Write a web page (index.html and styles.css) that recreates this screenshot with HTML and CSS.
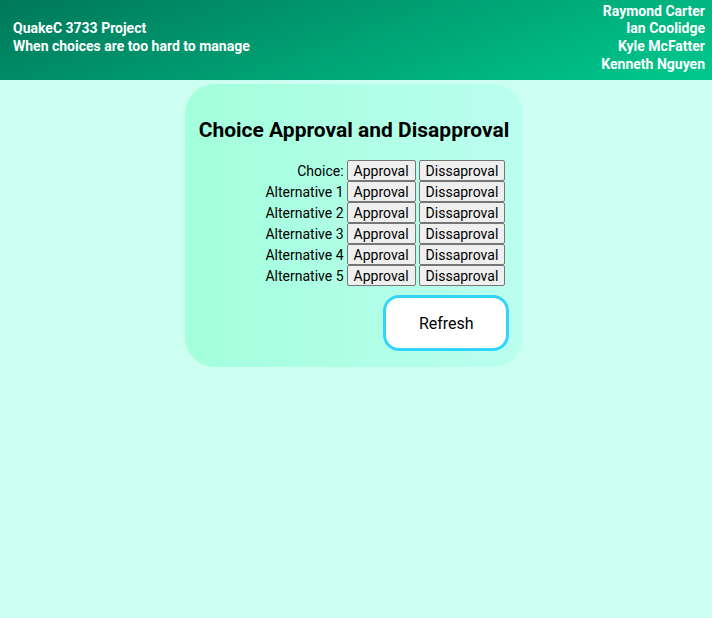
FILE: index.html
```html
<!DOCTYPE html>
<html>
<head>
<meta charset="utf-8">
<link rel="stylesheet" href="styles.css">
</head>
<body>
<header class="header">
  <div class="project">
    <div>QuakeC 3733 Project</div>
    <div>When choices are too hard to manage</div>
  </div>
  <div class="team">
    <div>Raymond Carter</div>
    <div>Ian Coolidge</div>
    <div>Kyle McFatter</div>
    <div>Kenneth Nguyen</div>
  </div>
</header>
<main class="main">
  <section class="card">
    <h2 class="title">Choice Approval and Disapproval</h2>
    <div class="rows">
      <div class="row"><span class="label">Choice:</span><button class="btn">Approval</button><button class="btn">Dissaproval</button></div>
      <div class="row"><span class="label">Alternative 1</span><button class="btn">Approval</button><button class="btn">Dissaproval</button></div>
      <div class="row"><span class="label">Alternative 2</span><button class="btn">Approval</button><button class="btn">Dissaproval</button></div>
      <div class="row"><span class="label">Alternative 3</span><button class="btn">Approval</button><button class="btn">Dissaproval</button></div>
      <div class="row"><span class="label">Alternative 4</span><button class="btn">Approval</button><button class="btn">Dissaproval</button></div>
      <div class="row"><span class="label">Alternative 5</span><button class="btn">Approval</button><button class="btn">Dissaproval</button></div>
    </div>
    <div class="actions">
      <button class="refresh">Refresh</button>
    </div>
  </section>
</main>
</body>
</html>
```
FILE: styles.css
```css
html, body {
  margin: 0;
  padding: 0;
}
body {
  background: #ccfff2;
  font-family: Roboto, "Noto Sans", sans-serif;
  color: #000;
  min-height: 618px;
}
.header {
  height: 80px;
  box-sizing: border-box;
  display: flex;
  justify-content: space-between;
  align-items: center;
  padding: 0 7px 4px 13px;
  background: linear-gradient(160deg, #00785a 0%, #00a576 55%, #00c98d 100%);
  color: #fff;
  font-weight: bold;
  font-size: 14px;
  line-height: 17.67px;
}
.team {
  text-align: right;
}
.main {
  display: flex;
  justify-content: center;
  padding: 4px 4px 0 0;
}
.card {
  padding: 15px 14px 16px;
  border-radius: 30px;
  background: linear-gradient(to right, #a3ffdc, #bbffef);
}
.title {
  margin: 18px 0 17px;
  font-size: 21px;
  font-weight: bold;
  line-height: 26px;
  text-align: center;
  white-space: nowrap;
}
.rows {
  display: flex;
  flex-direction: column;
  align-items: flex-end;
  padding-right: 4px;
}
.row {
  display: flex;
  align-items: center;
  gap: 3px;
  height: 21px;
  font-size: 14px;
}
.btn {
  font-family: Roboto, "Noto Sans", sans-serif;
  font-size: 14px;
  height: 21px;
  padding: 0 6px;
  background: #efefef;
  border: 1px solid #767676;
  border-radius: 2px;
  color: #000;
}
.actions {
  display: flex;
  justify-content: flex-end;
  margin-top: 9px;
}
.refresh {
  width: 126px;
  height: 56px;
  background: #fff;
  border: 3px solid #33d4fa;
  border-radius: 16px;
  font-family: Roboto, "Noto Sans", sans-serif;
  font-size: 16px;
  color: #000;
}
```
